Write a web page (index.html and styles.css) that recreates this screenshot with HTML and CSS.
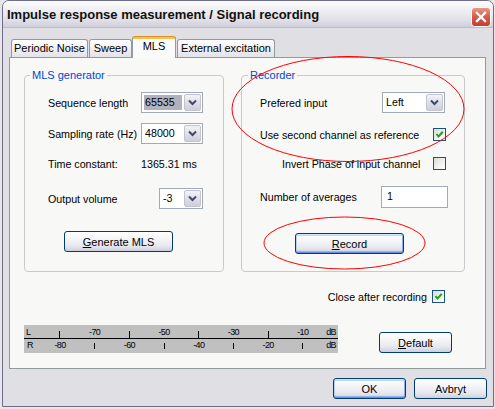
FILE: index.html
```html
<!DOCTYPE html>
<html>
<head>
<meta charset="utf-8">
<link rel="stylesheet" href="styles.css">
</head>
<body>
<div class="window">
  <div class="titlebar">
    <span class="title">Impulse response measurement / Signal recording</span>
    <span class="close">
      <svg width="20" height="20" viewBox="0 0 20 20">
        <defs>
          <linearGradient id="cg" x1="0" y1="0" x2="0" y2="1">
            <stop offset="0" stop-color="#ec9a8b"/>
            <stop offset="0.5" stop-color="#d65a48"/>
            <stop offset="1" stop-color="#c23e2e"/>
          </linearGradient>
        </defs>
        <rect x="0.5" y="0.5" width="19" height="19" rx="3" fill="url(#cg)" stroke="#ffffff"/>
        <path d="M6 6 L14 14 M14 6 L6 14" stroke="#ffffff" stroke-width="2.3" stroke-linecap="square"/>
      </svg>
    </span>
  </div>
  <div class="client">
    <div class="tabs">
      <div class="tab t1">Periodic Noise</div>
      <div class="tab t2">Sweep</div>
      <div class="tab t3 active">MLS</div>
      <div class="tab t4">External excitation</div>
    </div>
    <div class="panel">
      <div class="groups">
        <div class="group gen">
          <span class="legend">MLS generator</span>
          <div class="g-row first">
            <span>Sequence length</span>
            <div class="select"><span class="val hl">65535</span><span class="drop"><svg width="9" height="7" viewBox="0 0 9 7"><polyline points="1,1.5 4.5,5 8,1.5" fill="none" stroke="#3e4a66" stroke-width="2"/></svg></span></div>
          </div>
          <div class="g-row">
            <span>Sampling rate (Hz)</span>
            <div class="select"><span class="val">48000</span><span class="drop"><svg width="9" height="7" viewBox="0 0 9 7"><polyline points="1,1.5 4.5,5 8,1.5" fill="none" stroke="#3e4a66" stroke-width="2"/></svg></span></div>
          </div>
          <div class="g-row text">
            <span>Time constant:</span>
            <span>1365.31 ms</span>
          </div>
          <div class="g-row vol">
            <span>Output volume</span>
            <div class="select small"><span class="val">-3</span><span class="drop"><svg width="9" height="7" viewBox="0 0 9 7"><polyline points="1,1.5 4.5,5 8,1.5" fill="none" stroke="#3e4a66" stroke-width="2"/></svg></span></div>
          </div>
          <div class="btn gen-btn"><span><u>G</u>enerate MLS</span></div>
        </div>
        <div class="group rec">
          <span class="legend">Recorder</span>
          <div class="r-row r1">
            <span>Prefered input</span>
            <div class="select left"><span class="val">Left</span><span class="drop"><svg width="9" height="7" viewBox="0 0 9 7"><polyline points="1,1.5 4.5,5 8,1.5" fill="none" stroke="#3e4a66" stroke-width="2"/></svg></span></div>
          </div>
          <div class="r-row r2">
            <span>Use second channel as reference</span>
            <span class="cb"><svg width="11" height="11" viewBox="0 0 11 11"><polyline points="2.5,5 4.5,7.5 8.8,2.8" fill="none" stroke="#21a121" stroke-width="2"/></svg></span>
          </div>
          <div class="r-row r3">
            <span>Invert Phase of input channel</span>
            <span class="cb"></span>
          </div>
          <div class="r-row r4">
            <span>Number of averages</span>
            <div class="input">1</div>
          </div>
          <div class="btn focus rec-btn"><span><u>R</u>ecord</span></div>
        </div>
      </div>
      <div class="close-row">
        <span>Close after recording</span>
        <span class="cb"><svg width="11" height="11" viewBox="0 0 11 11"><polyline points="2.5,5 4.5,7.5 8.8,2.8" fill="none" stroke="#21a121" stroke-width="2"/></svg></span>
      </div>
      <div class="meter-row">
        <div class="meter">
          <div class="mrow lrow">
            <span class="side">L</span>
            <span class="tick"></span>
            <span class="lbl">-70</span>
            <span class="tick"></span>
            <span class="lbl">-50</span>
            <span class="tick"></span>
            <span class="lbl">-30</span>
            <span class="tick"></span>
            <span class="lbl">-10</span>
            <span class="db">dB</span>
          </div>
          <div class="mrow rrow">
            <span class="side">R</span>
            <span class="lbl">-80</span>
            <span class="tick"></span>
            <span class="lbl">-60</span>
            <span class="tick"></span>
            <span class="lbl">-40</span>
            <span class="tick"></span>
            <span class="lbl">-20</span>
            <span class="tick"></span>
            <span class="db">dB</span>
          </div>
        </div>
        <div class="btn default-btn"><span><u>D</u>efault</span></div>
      </div>
    </div>
    <div class="dialog-buttons">
      <div class="btn focus dlg">OK</div>
      <div class="btn dlg">Avbryt</div>
    </div>
  </div>
</div>
<svg class="annot" width="495" height="409" viewBox="0 0 495 409">
  <ellipse cx="348" cy="109" rx="116" ry="52.5" fill="none" stroke="#ff0000" stroke-width="1"/>
  <ellipse cx="344.5" cy="243" rx="80.5" ry="26" fill="none" stroke="#ff0000" stroke-width="1"/>
</svg>
</body>
</html>
```
FILE: styles.css
```css
* { box-sizing: border-box; }
html, body { margin: 0; padding: 0; }
body {
  position: relative;
  width: 495px;
  height: 409px;
  overflow: hidden;
  background: #e6e6ea;
  font-family: "Liberation Sans", Arial, sans-serif;
  font-size: 10.7px;
  color: #000;
}
.window {
  margin-left: 2px;
  width: 492px;
  height: 407px;
  border: 1px solid #6f6e88;
  border-radius: 7px 7px 0 0;
  background: #e0dfe3;
  display: flex;
  flex-direction: column;
  overflow: hidden;
}
.titlebar {
  height: 27px;
  flex: none;
  display: flex;
  padding: 2px 0 0 4px;
  background: linear-gradient(#fdfdfe 0%, #efeff3 35%, #e0dfe7 75%, #cfcedb 100%);
  border-bottom: 1px solid #bdbccb;
}
.title {
  flex: 1;
  font-weight: bold;
  font-size: 13px;
  line-height: 24px;
  height: 24px;
  color: #111;
}
.close {
  width: 20px;
  height: 20px;
  margin: 4px 2px 0 0;
  display: block;
}
.close svg { display: block; }
.client {
  flex: 1;
  display: flex;
  flex-direction: column;
  padding: 8px 7px 0 6px;
}
.tabs {
  height: 21px;
  display: flex;
  align-items: flex-end;
  padding-left: 2px;
  position: relative;
  z-index: 2;
}
.tab {
  height: 18px;
  border: 1px solid #919b9c;
  border-bottom: none;
  border-radius: 3px 3px 0 0;
  background: linear-gradient(#ffffff, #f1f1f4 50%, #e2e2e8);
  text-align: center;
  line-height: 17px;
  white-space: nowrap;
  font-size: 11px;
}
.t1 { width: 77px; }
.t2 { width: 43px; margin-left: 1px; }
.t3 { width: 44px; }
.t4 { width: 98px; margin-left: 1px; }
.tab.active {
  height: 22px;
  margin-bottom: -1px;
  border-top: 1px solid #e68b2c;
  background: linear-gradient(#ffc83c 0, #f8c34c 2px, #fcfcfd 2px, #fafaf9 100%);
  line-height: 18px;
}
.panel {
  height: 312px;
  border: 1px solid #919b9c;
  background: #f8f8f6;
  position: relative;
  z-index: 1;
  display: flex;
  flex-direction: column;
}
.groups {
  display: flex;
  gap: 17px;
  margin: 17px 0 0 14px;
}
.group {
  position: relative;
  height: 197px;
  border: 1px solid #c9cacd;
  border-radius: 4px;
  display: flex;
  flex-direction: column;
}
.gen { width: 200px; }
.rec { width: 224px; }
.legend {
  position: absolute;
  top: -7px;
  left: 5px;
  padding: 0 2px;
  line-height: 13px;
  background: #f8f8f6;
  color: #0046d5;
  font-size: 11px;
}
.rec .legend { left: 6px; }
.g-row {
  display: grid;
  grid-template-columns: 93px 62px;
  align-items: center;
  height: 21px;
  margin-top: 10px;
  padding-left: 23px;
  white-space: nowrap;
}
.g-row.first { margin-top: 16px; }
.g-row.text { height: 20px; }
.g-row.vol { margin-top: 14px; }
.g-row.vol .select { justify-self: end; }
.select {
  display: flex;
  width: 62px;
  height: 21px;
  border: 1px solid #a2aab6;
  background: #fff;
}
.select.small { width: 44px; }
.select.left { width: 63px; }
.val {
  flex: 1;
  line-height: 19px;
  padding-left: 3px;
}
.val.hl {
  margin: 2px 1px 2px 2px;
  line-height: 15px;
  padding-left: 1px;
  background: #b1b2bd;
}
.drop {
  width: 17px;
  height: 17px;
  margin: 1px;
  border: 1px solid #c3c4d2;
  border-radius: 2px;
  background: linear-gradient(#f2f2f7, #dcdce6 60%, #cfcfdc);
  display: flex;
  align-items: center;
  justify-content: center;
}
.drop svg { display: block; }
.btn {
  height: 21px;
  border: 1px solid #003c74;
  border-radius: 3px;
  background: linear-gradient(#ffffff, #f4f4f7 40%, #e6e6ee 75%, #cfcfdb);
  display: flex;
  align-items: center;
  justify-content: center;
  white-space: nowrap;
  font-size: 11px;
}
.btn.focus {
  box-shadow: inset 0 1px 0 #cee7ff, inset 0 -1px 0 #6b8fe6, inset 1px 0 0 #b6d0fb, inset -1px 0 0 #8aaef0, inset 0 2px 0 #bcd6fc, inset 0 -2px 0 #90b2f2;
}
.gen-btn {
  width: 109px;
  margin: 22px 0 0 39px;
}
.r-row {
  display: flex;
  align-items: center;
  justify-content: space-between;
  white-space: nowrap;
}
.r1 { height: 21px; margin-top: 16px; padding: 0 19px 0 18px; }
.r2 { height: 13px; margin-top: 15px; padding: 0 18px 0 18px; }
.r3 { height: 13px; margin-top: 16px; padding: 0 18px 0 40px; }
.r4 { height: 22px; margin-top: 16px; padding: 0 16px 0 18px; }
.input {
  width: 67px;
  height: 22px;
  border: 1px solid #a2aab6;
  background: #fff;
  line-height: 18px;
  padding-left: 5px;
}
.rec-btn {
  width: 109px;
  margin: 25px 0 0 53px;
}
.cb {
  flex: none;
  width: 13px;
  height: 13px;
  border: 1px solid #1c5180;
  background: linear-gradient(135deg, #dcdcd6, #f6f6f4 70%, #ffffff);
  display: block;
}
.cb svg { display: block; }
.close-row {
  display: flex;
  justify-content: flex-end;
  align-items: center;
  gap: 5px;
  height: 13px;
  margin-top: 18px;
  padding-right: 40px;
}
.meter-row {
  display: flex;
  align-items: flex-start;
  margin-top: 22px;
  margin-left: 14px;
}
.meter {
  width: 314px;
  height: 28px;
  background: #c0c0c0;
  display: flex;
  flex-direction: column;
  font-size: 9px;
  letter-spacing: -0.6px;
  color: #000;
}
.mrow {
  display: grid;
  grid-template-columns: 18.65px repeat(8, 34.7px) 1fr;
}
.lrow {
  height: 14px;
  border-bottom: 1px solid #000;
  align-items: end;
}
.rrow {
  height: 13px;
  align-items: center;
}
.lbl { justify-self: center; line-height: 9px; }
.lrow .lbl, .lrow .side, .lrow .db { padding-bottom: 1px; }
.side { padding-left: 2px; line-height: 9px; }
.rrow .side { padding-left: 3px; }
.db { justify-self: end; padding-right: 2px; line-height: 9px; }
.tick {
  justify-self: center;
  width: 1px;
  height: 7px;
  background: #000;
}
.rrow .tick { height: 6px; }
.default-btn {
  width: 73px;
  margin: 7px 0 0 41px;
}
.dialog-buttons {
  display: flex;
  justify-content: flex-end;
  gap: 8px;
  margin-top: 9px;
  margin-right: -1px;
}
.dlg { width: 73px; }
.annot {
  position: absolute;
  top: 0;
  left: 0;
  z-index: 10;
  pointer-events: none;
}
```
